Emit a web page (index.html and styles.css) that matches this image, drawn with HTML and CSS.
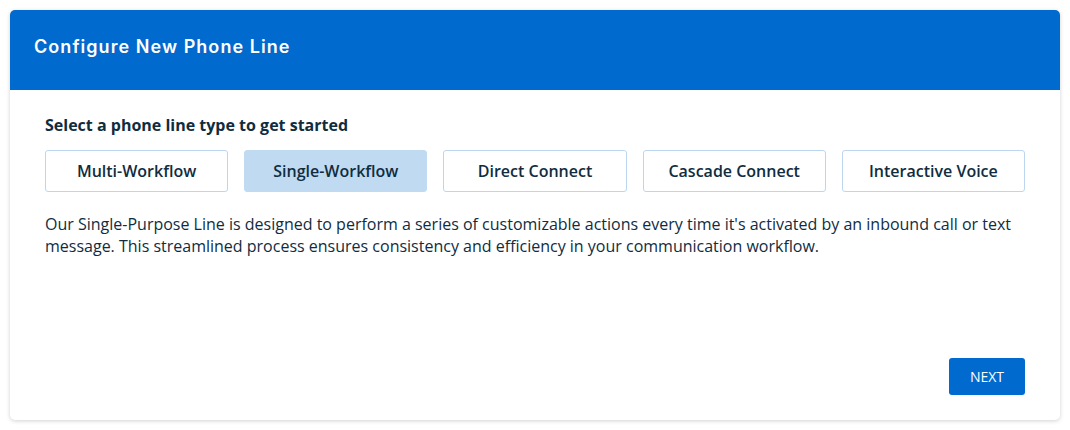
FILE: index.html
```html
<!DOCTYPE html>
<html>
<head>
<meta charset="utf-8">
<link rel="stylesheet" href="styles.css">
</head>
<body>
<div class="card">
  <div class="card-header">
    <h1 class="title">Configure New Phone Line</h1>
  </div>
  <div class="card-body">
    <div class="prompt">Select a phone line type to get started</div>
    <div class="options">
      <button class="opt">Multi-Workflow</button>
      <button class="opt selected">Single-Workflow</button>
      <button class="opt">Direct Connect</button>
      <button class="opt">Cascade Connect</button>
      <button class="opt">Interactive Voice</button>
    </div>
    <p class="desc">Our Single-Purpose Line is designed to perform a series of customizable actions every time it's activated by an inbound call or text message. This streamlined process ensures consistency and efficiency in your communication workflow.</p>
    <div class="actions">
      <button class="next">NEXT</button>
    </div>
  </div>
</div>
</body>
</html>
```

FILE: styles.css
```css
html, body {
  margin: 0;
  padding: 0;
  background: #ffffff;
}
body {
  padding: 10px;
  font-family: "Open Sans", "Liberation Sans", sans-serif;
  color: #0f2d3f;
}
.card {
  width: 1050px;
  height: 410px;
  box-sizing: border-box;
  border-radius: 5px;
  background: #fff;
  box-shadow: 0 1px 4px rgba(0,0,0,0.18);
  display: flex;
  flex-direction: column;
  overflow: hidden;
}
.card-header {
  height: 80px;
  background: #006ace;
  display: flex;
  align-items: center;
  padding: 0 24px;
  flex: none;
}
.title {
  margin: 0 0 8px 0;
  font-family: Inter, "Open Sans", sans-serif;
  font-weight: 600;
  font-size: 18px;
  color: #fff;
  letter-spacing: 1.05px;
}
.card-body {
  flex: 1;
  display: flex;
  flex-direction: column;
  padding: 24px 35px 25px 35px;
}
.prompt {
  font-weight: 700;
  font-size: 16px;
  line-height: 22px;
  margin-bottom: 14px;
}
.options {
  display: grid;
  grid-template-columns: repeat(5, 1fr);
  gap: 16px;
}
.opt {
  height: 42px;
  border: 1px solid #bcd6ef;
  border-radius: 3px;
  background: #fff;
  font-family: "Open Sans", sans-serif;
  font-weight: 600;
  font-size: 16px;
  color: #0f2d3f;
  padding: 0;
}
.opt.selected {
  background: #c0daf2;
  border-color: #c0daf2;
}
.desc {
  margin: 21px 0 0 0;
  font-size: 16px;
  line-height: 22px;
}
.actions {
  margin-top: auto;
  display: flex;
  justify-content: flex-end;
}
.next {
  width: 76px;
  height: 37px;
  border: none;
  border-radius: 3px;
  background: #006ace;
  color: #fff;
  font-family: "Open Sans", sans-serif;
  font-size: 14px;
  font-weight: 400;
  padding: 0;
}
```
